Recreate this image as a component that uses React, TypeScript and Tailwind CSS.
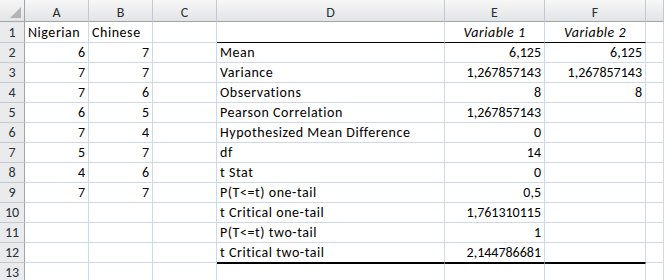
import React from "react";

const cols = ["A", "B", "C", "D", "E", "F", ""];

type Cell = { v?: string; align?: "l" | "r" | "c"; italic?: boolean };

const ab: [string, string][] = [
  ["6", "7"],
  ["7", "7"],
  ["7", "6"],
  ["6", "5"],
  ["7", "4"],
  ["5", "7"],
  ["4", "6"],
  ["7", "7"],
];

const stats: [string, string, string][] = [
  ["Mean", "6,125", "6,125"],
  ["Variance", "1,267857143", "1,267857143"],
  ["Observations", "8", "8"],
  ["Pearson Correlation", "1,267857143", ""],
  ["Hypothesized Mean Difference", "0", ""],
  ["df", "14", ""],
  ["t Stat", "0", ""],
  ["P(T<=t) one-tail", "0,5", ""],
  ["t Critical one-tail", "1,761310115", ""],
  ["P(T<=t) two-tail", "1", ""],
  ["t Critical two-tail", "2,144786681", ""],
];

function buildRows(): Cell[][] {
  const rows: Cell[][] = [];
  rows.push([
    { v: "Nigerian", align: "l" },
    { v: "Chinese", align: "l" },
    {},
    {},
    { v: "Variable 1", align: "c", italic: true },
    { v: "Variable 2", align: "c", italic: true },
    {},
  ]);
  for (let i = 0; i < 12; i++) {
    const pair = ab[i];
    const s = stats[i];
    rows.push([
      { v: pair?.[0], align: "r" },
      { v: pair?.[1], align: "r" },
      {},
      { v: s?.[0], align: "l" },
      { v: s?.[1], align: "r" },
      { v: s?.[2], align: "r" },
      {},
    ]);
  }
  return rows;
}

export default function App() {
  const rows = buildRows();

  return (
    <div
      className="h-[280px] w-[664px] overflow-hidden bg-white text-[14px] leading-[17px] text-black"
      style={{ fontFamily: "Carlito, Lato, 'Liberation Sans', sans-serif" }}
    >
      <div className="grid grid-cols-[25px_64px_64px_64px_228px_100px_101px_1fr] grid-rows-[22px_21px_repeat(12,20px)]">
        {/* corner */}
        <div className="relative border-b border-r border-[#9fa5ad] bg-gradient-to-b from-[#f6f6f6] to-[#e4e4e4]">
          <div className="absolute bottom-[3px] right-[3px] h-0 w-0 border-b-[11px] border-l-[11px] border-b-[#b4b4b4] border-l-transparent" />
        </div>
        {cols.map((c, i) => (
          <div
            key={"h" + i}
            className="flex items-end justify-center border-b border-r border-b-[#9fa5ad] border-r-[#c5c9ce] bg-gradient-to-b from-[#f7f7f7] to-[#e3e4e6] text-[#27313a]"
          >
            {c}
          </div>
        ))}

        {rows.map((row, r) => (
          <React.Fragment key={"r" + r}>
            <div className="flex items-end justify-center border-b border-r border-b-[#c5c9ce] border-r-[#9fa5ad] bg-[#eaebed] pb-[1px] text-[#27313a]">
              {r + 1}
            </div>
            {row.map((cell, c) => {
              const inTable = c >= 3 && c <= 5;
              let edge = "border-b border-b-[#d0d7e5]";
              if (inTable && (r === 0 || r === 11)) edge = "border-b border-b-black";
              if (inTable && r === 12) edge = "border-b border-t border-b-[#d0d7e5] border-t-black";
              const align =
                cell.align === "r"
                  ? "justify-end pr-[3px]"
                  : cell.align === "c"
                  ? "justify-center tracking-[0.5px]"
                  : "justify-start pl-[3px] tracking-[0.55px]";
              return (
                <div
                  key={"c" + c}
                  className={`flex items-end overflow-visible whitespace-nowrap border-r border-r-[#d0d7e5] pb-[1px] ${edge} ${align} ${
                    cell.italic ? "italic" : ""
                  }`}
                >
                  {cell.v}
                </div>
              );
            })}
          </React.Fragment>
        ))}
      </div>
    </div>
  );
}
